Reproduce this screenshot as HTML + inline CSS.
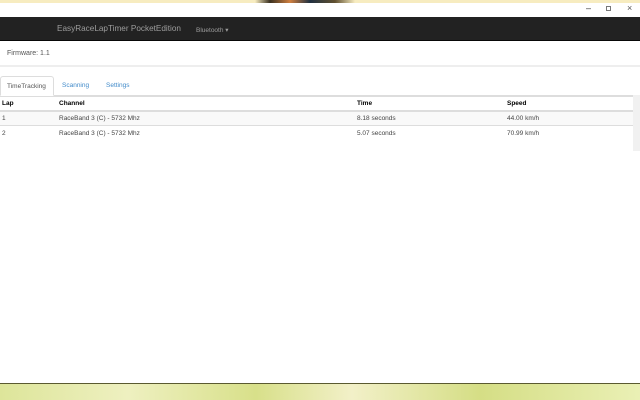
<!DOCTYPE html>
<html><head><meta charset="utf-8"><style>
*{margin:0;padding:0;box-sizing:border-box}
body{width:640px;height:400px;overflow:hidden;background:#fff;font-family:"Liberation Sans",Arial,sans-serif;position:relative}
.top{position:absolute;left:0;top:0;width:640px;height:3px;background:#f7ecc0}
.blob{position:absolute;left:255px;top:0;width:100px;height:3px;background:linear-gradient(90deg,#f7ecc0,#3a3020 15%,#d08040 35%,#203040 55%,#605030 80%,#f7ecc0)}
.title{position:absolute;top:3px;left:0;width:640px;height:14px;background:#fff}
.ctl{position:absolute;top:3px;font-size:9px;color:#333}
.nav{position:absolute;top:17px;left:0;width:640px;height:24px;background:#222;border-bottom:1px solid #080808}
.brand{position:absolute;left:57px;top:24px;font-size:8.2px;color:#9d9d9d}
.bt{position:absolute;left:196px;top:26px;font-size:6.5px;color:#9d9d9d}
.fw{position:absolute;left:7px;top:50px;font-size:7px;color:#555}
.sep{position:absolute;top:65px;left:0;width:640px;height:2px;background:#eee}
.tabs{position:absolute;top:95px;left:0;width:633px;height:1px;background:#ddd}
.tab{position:absolute;top:76px;height:20px;font-size:6.5px;padding-top:6px}
.t1{left:0;width:54px;border:1px solid #ddd;border-bottom:1px solid #fff;background:#fff;color:#555;padding-left:6px;border-radius:3px 3px 0 0}
table{position:absolute;top:96px;left:0;width:633px;border-collapse:collapse;font-size:6.5px}
td,th{text-align:left;height:15px;padding-left:2px;padding-top:1px;border-top:1px solid #ddd}
th{color:#000;font-weight:bold;border-bottom:2px solid #ddd;height:14px}
tr.o td{background:#f9f9f9}
td{color:#444}
.sb{position:absolute;left:633px;top:95px;width:7px;height:56px;background:#f1f1f1}
.bot{position:absolute;left:0;top:383px;width:640px;height:17px;background:linear-gradient(90deg,#dde59a,#eef0c0 20%,#d8e08a 40%,#f2f0c8 55%,#d5de85 75%,#eaf0b5);border-top:1px solid #5a5a30}
</style></head><body>
<div class="top"></div><div class="blob"></div>
<div class="title"></div>
<div class="ctl" style="left:586px;">&#8211;</div>
<div class="ctl" style="left:606px;top:6px;width:5px;height:5px;border:1px solid #777"></div>
<div class="ctl" style="left:627px;color:#555">&#215;</div>
<div class="nav"></div>
<div class="brand">EasyRaceLapTimer PocketEdition</div>
<div class="bt">Bluetooth &#9662;</div>
<div class="fw">Firmware: 1.1</div>
<div class="sep"></div>
<div class="tabs"></div>
<div class="tab t1">TimeTracking</div>
<div class="tab" style="left:62px;color:#428bca">Scanning</div>
<div class="tab" style="left:106px;color:#428bca">Settings</div>
<table>
<tr><th style="width:57px;color:#000">Lap</th><th style="width:298px">Channel</th><th style="width:150px">Time</th><th>Speed</th></tr>
<tr class="o"><td>1</td><td>RaceBand 3 (C) - 5732 Mhz</td><td>8.18 seconds</td><td>44.00 km/h</td></tr>
<tr><td>2</td><td>RaceBand 3 (C) - 5732 Mhz</td><td>5.07 seconds</td><td>70.99 km/h</td></tr>
</table>
<div class="sb"></div>
<div class="bot"></div>
</body></html>
